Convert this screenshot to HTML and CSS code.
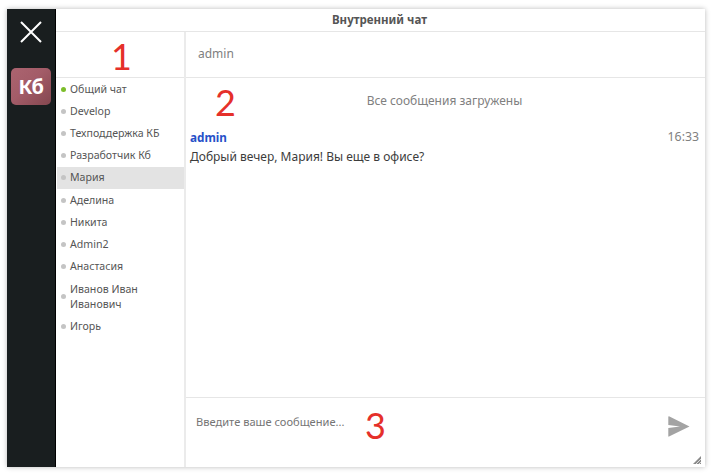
FILE: index.html
```html
<!DOCTYPE html>
<html lang="ru">
<head>
<meta charset="utf-8">
<title>Внутренний чат</title>
<link rel="stylesheet" href="styles.css">
</head>
<body>
<div class="window">
  <aside class="rail">
    <svg class="close" width="24" height="24" viewBox="0 0 24 24"><path d="M2 2L22 22M22 2L2 22" stroke="#fff" stroke-width="2" fill="none"/></svg>
    <div class="tile">Кб</div>
  </aside>
  <main class="app">
    <div class="title">Внутренний чат</div>
    <div class="columns">
      <nav class="side">
        <div class="side-head"></div>
        <ul class="list">
          <li class="item online">Общий чат</li>
          <li class="item">Develop</li>
          <li class="item">Техподдержка КБ</li>
          <li class="item">Разработчик Кб</li>
          <li class="item active">Мария</li>
          <li class="item">Аделина</li>
          <li class="item">Никита</li>
          <li class="item">Admin2</li>
          <li class="item">Анастасия</li>
          <li class="item">Иванов Иван Иванович</li>
          <li class="item">Игорь</li>
        </ul>
      </nav>
      <section class="chat">
        <div class="chat-head">admin</div>
        <div class="messages">
          <div class="loaded">Все сообщения загружены</div>
          <div class="msg-top"><span class="author">admin</span><span class="time">16:33</span></div>
          <div class="msg-text">Добрый вечер, Мария! Вы еще в офисе?</div>
        </div>
        <div class="composer">
          <span class="placeholder">Введите ваше сообщение...</span>
          <svg class="send" width="22" height="21" viewBox="0 0 22 21"><path d="M1 0.3Q0.3 0.2 0.3 1V9L12 10.5L0.3 12V20Q0.3 20.8 1 20.6L21.5 10.5L1 0.3Z" fill="#a3a3a3"/></svg>
          <svg class="grip" width="8" height="8" viewBox="0 0 8 8"><path d="M0 8L8 0V8Z" fill="#8a8a8a"/><path d="M3 8L8 3M6 8L8 6" stroke="#fff" stroke-width=".7"/></svg>
        </div>
      </section>
    </div>
  </main>
  <span class="mark mark-1">1</span>
  <span class="mark mark-2">2</span>
  <span class="mark mark-3">3</span>
</div>
</body>
</html>
```
FILE: styles.css
```css
* { box-sizing: border-box; }
html, body { margin: 0; height: 100%; background: #fff; }
body { padding: 9px 7px 8px 7px; font-family: "Noto Sans", "Open Sans", sans-serif; color: #555; }
.window {
  position: relative;
  display: flex;
  width: 698px;
  height: 458px;
  background: #fff;
  box-shadow: 0 0 5px rgba(0,0,0,.28);
}
.rail {
  flex: 0 0 49px;
  background: #191e1f;
  border-right: 1px solid #000;
  display: flex;
  flex-direction: column;
  align-items: center;
  padding-top: 11px;
}
.close { display: block; margin-left: 0; }
.tile {
  width: 40px;
  height: 37px;
  margin-top: 24px;
  border-radius: 5px;
  background: linear-gradient(135deg, #ab6470 0%, #a35c68 45%, #84474f 100%);
  color: #fff;
  font-size: 20px;
  font-weight: 700;
  line-height: 37px;
  text-align: center;
  letter-spacing: -.5px;
}
.app { flex: 1; display: flex; flex-direction: column; min-width: 0; }
.title {
  height: 23px;
  border-bottom: 1px solid #e6e6e6;
  font-size: 11.5px;
  font-weight: 700;
  line-height: 21px;
  text-align: center;
  color: #555;
  padding-right: 2px;
}
.columns { flex: 1; display: flex; min-height: 0; }
.side { flex: 0 0 130px; border-right: 2px solid #ebebeb; }
.side-head { height: 46px; border-bottom: 1px solid #e6e6e6; }
.list { list-style: none; margin: 0; padding: 0; }
.item {
  position: relative;
  padding: 3.62px 20px 3.62px 13px;
  margin-left: 1px;
  font-size: 10.6px;
  line-height: 15px;
  color: #555;
}
.item::before {
  content: "";
  position: absolute;
  left: 4px;
  top: 50%;
  width: 5px;
  height: 5px;
  margin-top: -2.5px;
  border-radius: 50%;
  background: #c4c4c4;
}
.item.online::before { background: #7cbd2a; }
.item.active { background: #e3e3e3; }
.chat { flex: 1; display: flex; flex-direction: column; min-width: 0; }
.chat-head {
  height: 46px;
  border-bottom: 1px solid #e6e6e6;
  padding-left: 12px;
  font-size: 12px;
  line-height: 44px;
  color: #808080;
}
.messages { flex: 1; padding: 14px 6px 0 4px; }
.loaded { text-align: center; font-size: 12px; line-height: 18px; color: #808080; }
.msg-top { display: flex; justify-content: space-between; align-items: center; margin-top: 18px; line-height: 18px; }
.author { font-size: 11.7px; font-weight: 700; color: #2650c8; }
.time { font-size: 12.3px; color: #808080; }
.msg-text { font-size: 12px; line-height: 18px; margin-top: 2px; color: #3c3c3c; }
.composer {
  position: relative;
  flex: 0 0 70px;
  display: flex;
  align-items: flex-start;
  justify-content: space-between;
  border-top: 1px solid #e6e6e6;
  padding: 15px 15px 0 10px;
}
.placeholder { font-size: 11.1px; line-height: 17px; color: #757575; }
.send { margin-top: 3px; display: block; }
.grip { position: absolute; right: 4px; bottom: 3px; }
.mark {
  position: absolute;
  font-family: "Lato", sans-serif;
  font-weight: 400;
  font-size: 36px;
  line-height: 36px;
  color: #e5302a;
}
.mark-1 { left: 104px; top: 29px; }
.mark-2 { left: 208px; top: 75px; }
.mark-3 { left: 358px; top: 398px; }
```
